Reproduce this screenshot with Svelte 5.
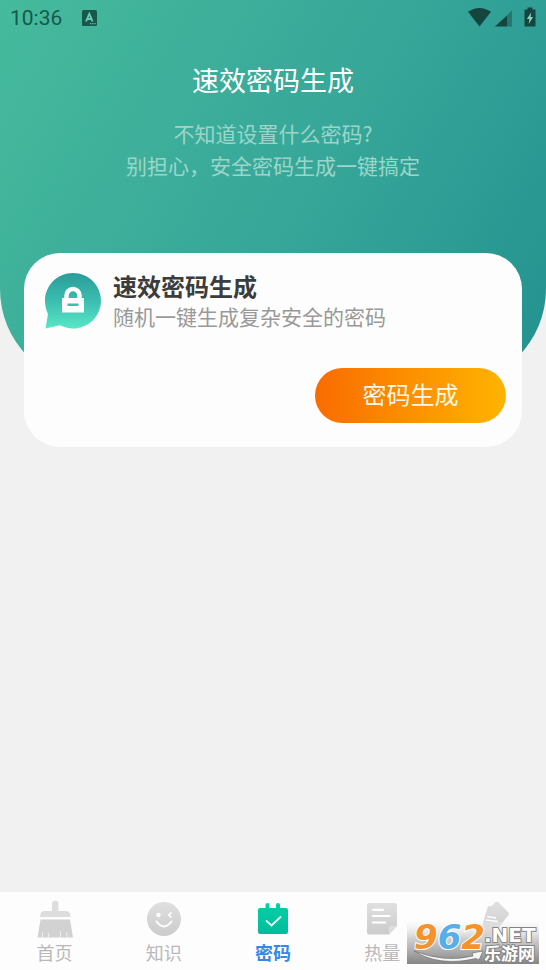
<script>
  const tabs = [
    { id: 'home', label: '首页' },
    { id: 'learn', label: '知识' },
    { id: 'password', label: '密码' },
    { id: 'heat', label: '热量' },
    { id: 'write', label: '' }
  ];
  let active = $state('password');
</script>

<div class="screen">
  <div class="hero">
    <div class="status">
      <span class="time">10:36</span>
      <svg class="app-badge" width="15" height="16" viewBox="0 0 15 16" aria-hidden="true">
        <rect width="15" height="16" rx="1.5" fill="#17584c" />
        <path d="M4 11.5 L7.3 3.8 L10.6 11.5 M5.2 9 H9.4" fill="none" stroke="#6cc8b0" stroke-width="1.9" />
        <path d="M8 13.7h1.2M10.2 13.7h1.2M12.4 13.7h1.2" stroke="#6cc8b0" stroke-width="1.2" />
      </svg>
      <svg class="signals" width="70" height="22" viewBox="0 0 70 22" aria-hidden="true">
        <path d="M0 4.8 Q11.5 -2.8 23 4.8 L11.5 19.5 Z" fill="#14463f" />
        <path d="M27 19.5 L39.5 8 V19.5 Z" fill="#14463f" />
        <path d="M39.5 8 L44 3.2 V19.5 H39.5 Z" fill="#26776f" />
        <path d="M59.5 0.5h5v2h3v17h-11v-17h3z" fill="#14463f" />
        <path d="M63.2 5.5 L58.9 12h2.6l-.8 5 4.4-7h-2.5z" fill="#8fd0c6" />
      </svg>
    </div>
    <h1>速效密码生成</h1>
    <p>不知道设置什么密码?<br />别担心，安全密码生成一键搞定</p>
  </div>

  <main>
    <section class="card">
      <div class="intro">
        <svg width="56" height="56" viewBox="0 0 56 56" aria-hidden="true">
          <defs>
            <linearGradient id="bubble" x1="0" y1="0" x2="0" y2="1">
              <stop offset="0" stop-color="#2b9c98" />
              <stop offset=".5" stop-color="#3bbdb0" />
              <stop offset="1" stop-color="#58e8c6" />
            </linearGradient>
          </defs>
          <path
            d="M28 0 C43.5 0 56 12.4 56 27.7 C56 43 43.5 55.5 28 55.5 C23 55.5 18.5 54.3 15 52.3 L0.5 55.5 L3 41 C1 37 0 32.5 0 27.7 C0 12.4 12.5 0 28 0 Z"
            fill="url(#bubble)"
          />
          <path d="M21.5 27 V22.5 a6.5 6.5 0 0 1 13 0 V27" fill="none" stroke="#fff" stroke-width="4.5" />
          <rect x="17" y="25" width="22" height="14.5" fill="#fff" />
          <rect x="22.500" y="30.500" width="11" height="2.500" fill="#3bbdb0" />
        </svg>
        <div>
          <h2>速效密码生成</h2>
          <p>随机一键生成复杂安全的密码</p>
        </div>
      </div>
      <button class="generate" type="button">密码生成</button>
    </section>
  </main>

  <nav>
    {#each tabs as tab (tab.id)}
      <button
        type="button"
        class:active={active === tab.id}
        aria-label={tab.label || '更多'}
        onclick={() => (active = tab.id)}
      >
        <svg width="36" height="38" viewBox="0 0 36 38" aria-hidden="true">
          <defs>
            <linearGradient id="grey" x1="0" y1="0" x2="0" y2="1">
              <stop offset="0" stop-color="#e0e0e0" />
              <stop offset="1" stop-color="#cbcbcb" />
            </linearGradient>
            <linearGradient id="green" x1="0" y1="0" x2="0" y2="1">
              <stop offset="0" stop-color="#06cfa5" />
              <stop offset="1" stop-color="#00bd9b" />
            </linearGradient>
          </defs>
          {#if tab.id === 'home'}
            <path d="M15 11 V4 a3.2 3.2 0 0 1 6.4 0 V11 H29 Q33.5 11 33.5 17 H3 Q3 11 7.5 11 Z" fill="#dddddd" />
            <path d="M3.5 19.5 H33 L36 37.500 H0.5 Z" fill="#d2d2d2" />
            <path d="M5.500 32 V38 M11.500 33 V38 M23.500 31 V38 M29.500 32 L30.500 38" stroke="#ededed" stroke-width="1" />
          {:else if tab.id === 'learn'}
            <circle cx="18" cy="19" r="17" fill="url(#grey)" />
            <circle cx="12.5" cy="15" r="2.2" fill="#fff" />
            <path d="M25.5 12.5 L22.8 15 L25.5 17.5" fill="none" stroke="#fff" stroke-width="1.6" />
            <path d="M10.5 21.5 Q18 31.5 25.5 21.5" fill="none" stroke="#fff" stroke-width="2" stroke-linecap="round" />
          {:else if tab.id === 'password'}
            <path
              d="M5 8 H10.5 V5 a2 2 0 0 1 4 0 V8 H21 V5 a2 2 0 0 1 4 0 V8 H31 a2 2 0 0 1 2 2 V32 a2 2 0 0 1 -2 2 H5 a2 2 0 0 1 -2 -2 V10 a2 2 0 0 1 2 -2 Z"
              fill="url(#green)"
            />
            <path d="M11.5 21 L16.5 25.5 L25.5 17" fill="none" stroke="#e9fff9" stroke-width="1.8" stroke-linecap="round" />
          {:else if tab.id === 'heat'}
            <path d="M5 3 H31 a2 2 0 0 1 2 2 V26 L25 34.5 H5 a2 2 0 0 1 -2 -2 V5 a2 2 0 0 1 2 -2 Z" fill="url(#grey)" />
            <path d="M33 26 L25 34.5 V28 a2 2 0 0 1 2 -2 Z" fill="#dedede" />
            <path d="M9 9.8 H19 M9 16 H25.5 M9 22.5 H21" stroke="#fff" stroke-width="2.2" stroke-linecap="round" />
          {:else}
            <path d="M15 6 Q20 7 22 2 Q26 1 27 4 L36 13 Q36 16 33 18 L20 36 L6 37 Z" fill="url(#grey)" />
            <path d="M14 16.5 L23 18 M12.5 20 L25 21.5" stroke="#fff" stroke-width="1.6" />
          {/if}
        </svg>
        <span>{tab.label}</span>
      </button>
    {/each}

    <svg class="mark" width="132" height="48" viewBox="0 -6 132 48" role="img" aria-label="962.NET 乐游网">
      <defs>
        <linearGradient id="shade" x1="0" y1="0" x2="0" y2="1">
          <stop offset="0" stop-color="#f4f4f4" stop-opacity=".3" />
          <stop offset=".4" stop-color="#cacaca" stop-opacity=".9" />
          <stop offset="1" stop-color="#848484" />
        </linearGradient>
      </defs>
      <rect width="132" height="42" fill="url(#shade)" />
      <path d="M7 29 Q38 41 66 34 L65 31 L76 29 L72 38 L69 36.5 Q32 45 7 29 Z" fill="#f6f6f6" stroke="#6e6e6e" stroke-width=".7" />
      <text class="digits" x="7" y="27"><tspan fill="#f4932b">9</tspan><tspan fill="#58aee6">6</tspan><tspan fill="#f4932b">2</tspan></text>
      <text class="net" x="77" y="20">.NET</text>
      <text class="cn" x="77" y="38">乐游网</text>
    </svg>
  </nav>
</div>

<style>
  :global(body) {
    margin: 0;
    background: #f1f1f1;
  }
  .screen {
    display: flex;
    flex-direction: column;
    min-height: 100vh;
    font-family: 'Noto Sans CJK SC', sans-serif;
  }
  h1,
  h2,
  p {
    margin: 0;
  }
  button {
    border: 0;
    padding: 0;
    font-family: inherit;
    cursor: pointer;
  }
  .hero {
    box-sizing: border-box;
    height: 385px;
    border-radius: 0 0 96px 96px;
    background: linear-gradient(120deg, #46ba9c 0%, #36a699 55%, #23918f 100%);
    text-align: center;
    color: #fff;
  }
  .status {
    display: flex;
    align-items: center;
    height: 36px;
    padding: 0 8px 0 10px;
  }
  .time {
    font: 400 21px/38px Roboto, sans-serif;
    color: #17584c;
  }
  .app-badge {
    margin-left: 20px;
  }
  .signals {
    margin-left: auto;
  }
  h1 {
    margin-top: 24px;
    font-size: 27px;
    font-weight: 400;
    line-height: 40px;
  }
  .hero p {
    margin-top: 17px;
    font-size: 21px;
    font-weight: 400;
    line-height: 32px;
    color: #9cd6ca;
  }
  main {
    flex: 1;
    padding: 0 24px;
  }
  .card {
    display: flex;
    flex-direction: column;
    justify-content: space-between;
    box-sizing: border-box;
    height: 194px;
    margin-top: -132px;
    padding: 16px 16px 24px 21px;
    border-radius: 36px;
    background: #fdfdfd;
  }
  .intro {
    display: flex;
    align-items: flex-end;
    gap: 12px;
  }
  h2 {
    font-size: 24px;
    font-weight: 700;
    line-height: 34px;
    color: #3c3c3c;
  }
  .intro p {
    font-size: 21px;
    font-weight: 400;
    line-height: 26px;
    color: #999;
  }
  .generate {
    align-self: flex-end;
    width: 191px;
    height: 55px;
    padding-bottom: 4px;
    border-radius: 28px;
    background: linear-gradient(90deg, #f96c00, #ffb400);
    font-size: 24px;
    line-height: 51px;
    color: #fff8e6;
  }
  nav {
    position: relative;
    display: flex;
    height: 78px;
    background: #fdfdfd;
  }
  nav button {
    flex: 1;
    display: flex;
    flex-direction: column;
    align-items: center;
    padding-top: 8px;
    background: none;
    font-size: 18px;
    font-weight: 400;
    line-height: 28px;
    color: #b8b8b8;
  }
  nav button.active {
    font-weight: 700;
    color: #3489e6;
  }
  .mark {
    position: absolute;
    right: 7px;
    bottom: 6px;
  }
  .mark text {
    stroke-width: 2px;
    paint-order: stroke;
  }
  .mark .digits {
    font: italic 700 34px 'DejaVu Sans', sans-serif;
    stroke: #fff;
  }
  .mark .net {
    font: 700 20px 'DejaVu Sans', sans-serif;
    fill: #fff;
    stroke: #858585;
  }
  .mark .cn {
    font: 700 17px 'Noto Sans CJK SC', sans-serif;
    fill: #fff;
    stroke: #858585;
  }
</style>
